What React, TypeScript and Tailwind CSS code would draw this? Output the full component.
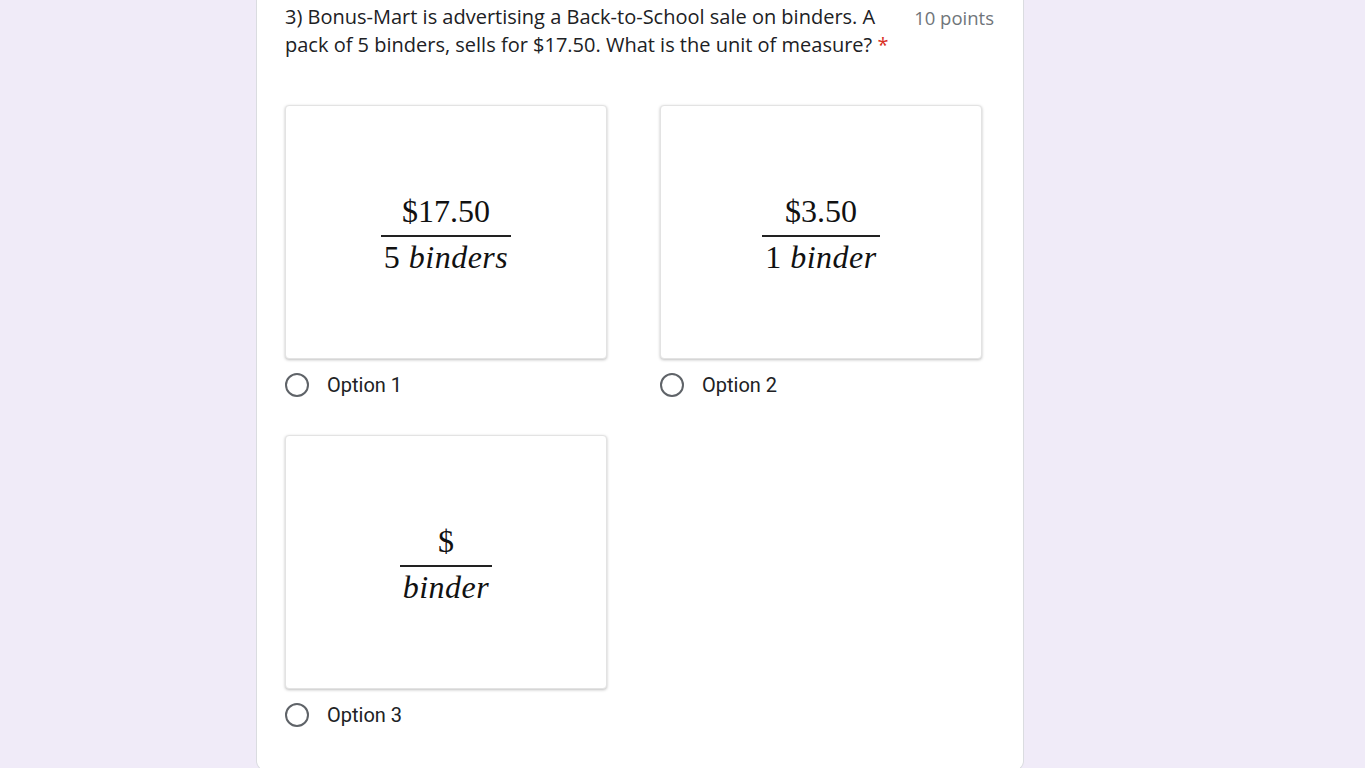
import React from "react";

type Opt = { label: string; top: React.ReactNode; bottom: React.ReactNode };

const options: Opt[] = [
  { label: "Option 1", top: "$17.50", bottom: <>5 <i>binders</i></> },
  { label: "Option 2", top: "$3.50", bottom: <>1 <i>binder</i></> },
  { label: "Option 3", top: "$", bottom: <i>binder</i> },
];

function Fraction({ top, bottom }: { top: React.ReactNode; bottom: React.ReactNode }) {
  return (
    <div
      className="mt-[4px] inline-flex flex-col items-center text-[32px] leading-none text-[#111]"
      style={{ fontFamily: '"Liberation Serif", "Times New Roman", serif' }}
    >
      <div className="px-[4px] pb-[8px]">{top}</div>
      <div className="self-stretch h-[2px] bg-[#222]" />
      <div className="px-[3px] pt-[4px] tracking-[0.5px]">{bottom}</div>
    </div>
  );
}

function Choice({ opt }: { opt: Opt }) {
  return (
    <div>
      <div className="w-[322px] h-[254px] bg-white rounded-[4px] border border-[#e3e3e3] shadow-[0_1px_3px_rgba(0,0,0,0.25)] flex items-center justify-center">
        <Fraction top={opt.top} bottom={opt.bottom} />
      </div>
      <div className="flex items-center mt-[11px]">
        <div className="w-[24px] h-[24px] rounded-full border-2 border-[#5f6368]" />
        <span className="ml-[18px] text-[20px] text-[#202124]" style={{ fontFamily: "Roboto, sans-serif" }}>
          {opt.label}
        </span>
      </div>
    </div>
  );
}

export default function App() {
  return (
    <div className="min-h-[768px] bg-[#f0ebf8]">
      <div className="ml-[256px] w-[768px] bg-white rounded-b-[10px] border-x border-b border-[#dadce0] pl-[28px] pr-[29px] pt-[3px] pb-[40px]">
        <div className="flex items-start" style={{ fontFamily: '"Open Sans", Roboto, sans-serif' }}>
          <div className="w-[605px] text-[20px] leading-[28px] text-[#202124]">
            3) Bonus-Mart is advertising a Back-to-School sale on binders. A pack of 5 binders, sells for $17.50. What is
            the unit of measure? <span className="text-[#d93025]">*</span>
          </div>
          <div className="ml-auto pt-[1px] text-[18.5px] leading-[28px] text-[#70757a]">10 points</div>
        </div>
        <div className="mt-[46px] grid grid-cols-[375px_322px] gap-y-[35px]">
          {options.map((o) => (
            <Choice key={o.label} opt={o} />
          ))}
        </div>
      </div>
    </div>
  );
}
